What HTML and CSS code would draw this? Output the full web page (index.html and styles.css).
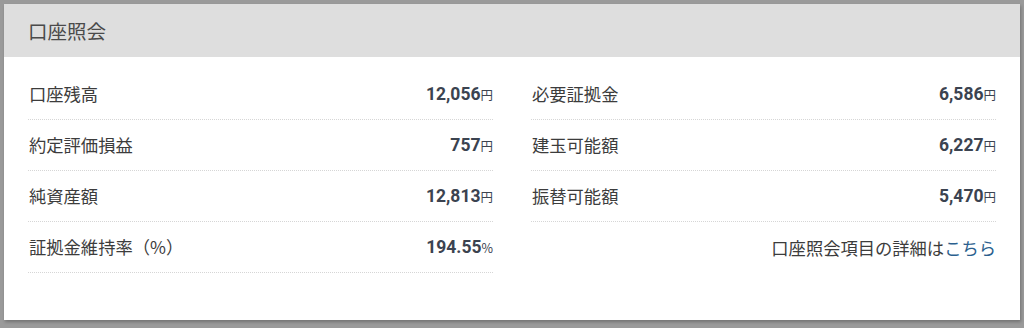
FILE: index.html
```html
<!DOCTYPE html>
<html lang="ja">
<head>
<meta charset="utf-8">
<link rel="stylesheet" href="styles.css">
</head>
<body>
<div class="card">
  <div class="card-header">口座照会</div>
  <div class="card-body">
    <div class="col">
      <div class="row"><span class="label">口座残高</span><span class="value">12,056<small>円</small></span></div>
      <div class="row"><span class="label">約定評価損益</span><span class="value">757<small>円</small></span></div>
      <div class="row"><span class="label">純資産額</span><span class="value">12,813<small>円</small></span></div>
      <div class="row"><span class="label">証拠金維持率（%）</span><span class="value">194.55<small>%</small></span></div>
    </div>
    <div class="col">
      <div class="row"><span class="label">必要証拠金</span><span class="value">6,586<small>円</small></span></div>
      <div class="row"><span class="label">建玉可能額</span><span class="value">6,227<small>円</small></span></div>
      <div class="row"><span class="label">振替可能額</span><span class="value">5,470<small>円</small></span></div>
      <div class="row row-note"><span class="note">口座照会項目の詳細は<a href="#" class="link">こちら</a></span></div>
    </div>
  </div>
</div>
</body>
</html>
```

FILE: styles.css
```css
* { box-sizing: border-box; }
html, body { margin: 0; padding: 0; }
body {
  background: #9a9a9a;
  width: 1024px;
  height: 328px;
  padding: 4px 4px 8px 4px;
  font-family: Roboto, "Noto Sans CJK JP", sans-serif;
}
.card {
  background: #fff;
  width: 1016px;
  height: 316px;
  box-shadow: 1px 2px 3px rgba(0,0,0,0.25);
}
.card-header {
  background: #dedede;
  height: 53px;
  padding-left: 24px;
  display: flex;
  align-items: center;
  font-size: 19.5px;
  color: #4a4a4a;
  font-family: "Noto Sans CJK JP", sans-serif;
}
.card-body {
  display: grid;
  grid-template-columns: 465px 465px;
  column-gap: 38px;
  padding: 12px 24px 0 24px;
}
.row {
  height: 51px;
  display: flex;
  align-items: center;
  justify-content: space-between;
  border-bottom: 1px dotted #d6d6d6;
  padding-bottom: 1px;
}
.row-note {
  border-bottom: none;
  justify-content: flex-end;
}
.label, .note {
  font-family: "Noto Sans CJK JP", sans-serif;
  font-size: 17.3px;
  color: #3c3c3c;
  padding-left: 1px;
}
.value {
  font-family: Roboto, sans-serif;
  font-weight: 700;
  font-size: 17.5px;
  color: #3b4350;
}
.value small {
  font-family: "Noto Sans CJK JP", sans-serif;
  font-weight: 400;
  font-size: 12.5px;
  color: #3b4350;
}
.link {
  color: #2b5f8e;
  text-decoration: none;
}
```
